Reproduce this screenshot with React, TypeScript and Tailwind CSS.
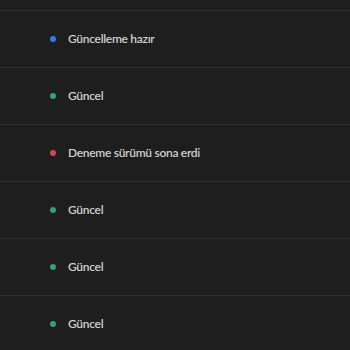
const rows = [
  { label: "Güncelleme hazır", dot: "bg-[#2f7ef0]" },
  { label: "Güncel", dot: "bg-[#2aa574]" },
  { label: "Deneme sürümü sona erdi", dot: "bg-[#e0434b]" },
  { label: "Güncel", dot: "bg-[#2aa574]" },
  { label: "Güncel", dot: "bg-[#2aa574]" },
  { label: "Güncel", dot: "bg-[#2aa574]" },
];

export default function App() {
  return (
    <div className="h-[350px] w-[350px] overflow-hidden bg-[#1e1e1e] font-['Lato','Liberation_Sans',sans-serif]">
      <div className="h-[11px] border-b border-[#2e2e2e]" />
      {rows.map((row, i) => (
        <div
          key={i}
          className="flex h-[57px] items-center gap-[12px] border-b border-[#2e2e2e] pl-[50px]"
        >
          <span className={`h-[6px] w-[6px] rounded-full ${row.dot}`} />
          <span className="text-[12px] font-semibold tracking-[-0.3px] text-[#cfcfcf]">
            {row.label}
          </span>
        </div>
      ))}
    </div>
  );
}
